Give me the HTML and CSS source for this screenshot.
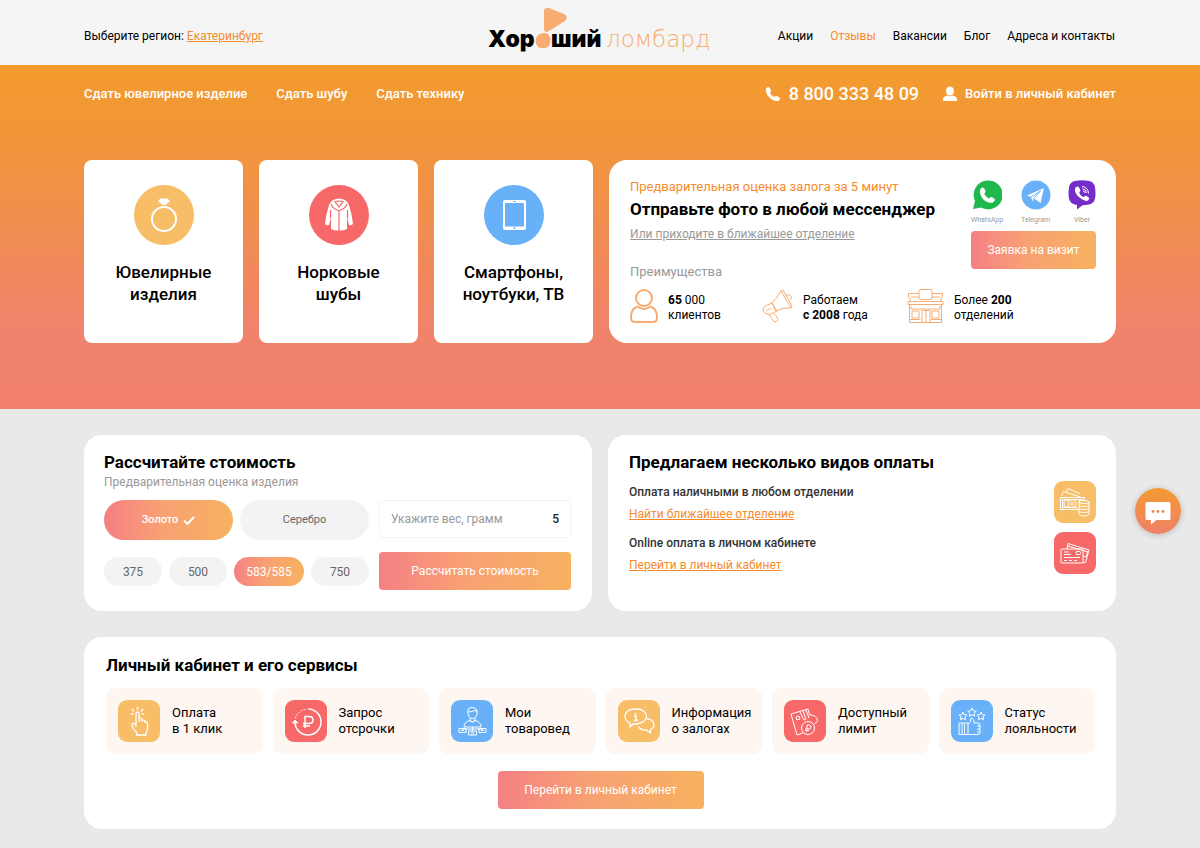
FILE: index.html
```html
<!DOCTYPE html>
<html lang="ru">
<head>
<meta charset="utf-8">
<meta name="viewport" content="width=device-width, initial-scale=1">
<title>Хороший ломбард</title>
<link rel="stylesheet" href="styles.css">
</head>
<body>
<header class="topbar">
  <div class="container topbar-row">
    <p class="region">Выберите регион: <a class="link" href="#">Екатеринбург</a></p>
    <a class="logo" href="#" aria-label="Хороший ломбард">
      <svg width="226" height="52" viewBox="0 0 226 52">
        <path d="M57 6q0-5 5-4l15 6q5 3 1 7L62 25q-5 3-5-3z" fill="#f8ac72"/>
        <path d="M51 29q7-4 11 0 3 5 0 11-5 4-11 1-5-6 0-12z" fill="#f8ac72"/>
        <text class="logo-bold" x="1" y="41">Хор</text>
        <text class="logo-bold" x="64" y="41">ший</text>
        <text class="logo-thin" x="119" y="41">ломбард</text>
      </svg>
    </a>
    <nav class="topnav">
      <a href="#">Акции</a>
      <a class="active" href="#">Отзывы</a>
      <a href="#">Вакансии</a>
      <a href="#">Блог</a>
      <a href="#">Адреса и контакты</a>
    </nav>
  </div>
</header>

<section class="hero">
  <div class="container">
    <div class="hero-nav">
      <nav class="hero-links">
        <a href="#">Сдать ювелирное изделие</a>
        <a href="#">Сдать шубу</a>
        <a href="#">Сдать технику</a>
      </nav>
      <div class="hero-contacts">
        <a class="phone" href="tel:88003334809">
          <svg width="16" height="16" viewBox="0 0 16 16"><path fill="#fff" d="M1 2.600C2.200 1 3.600.6 4.500 1.700l1.300 2c.6 1 .3 1.700-.8 2.800.7 2 2.400 3.700 4.500 4.500 1.100-1.100 1.800-1.400 2.800-.8l2 1.300c1.200.9.700 2.300-.9 3.400C7.500 16.400-.4 8.400 1 2.600z"/></svg>
          8 800 333 48 09
        </a>
        <a class="login" href="#">
          <svg width="14" height="16" viewBox="0 0 14 16"><ellipse cx="7" cy="5" rx="4" ry="4.500" fill="#fff"/><path fill="#fff" d="M0 15v-2c0-2 2-3 4.500-3.500 1.500 1 3.500 1 5 0C12 10 14 11 14 13v2z"/></svg>
          Войти в личный кабинет
        </a>
      </div>
    </div>

    <div class="hero-grid">
      <a class="category" href="#">
        <svg width="60" height="60" viewBox="0 0 60 60"><circle cx="30" cy="30" r="30" fill="#f7bd67"/><circle cx="30" cy="34" r="12" fill="none" stroke="#fff" stroke-width="2"/><path d="M26.500 13.500h7l2.500 2.500-4.500 4h-3l-4.500-4z" fill="#fff"/></svg>
        <span>Ювелирные<br>изделия</span>
      </a>
      <a class="category" href="#">
        <svg width="60" height="60" viewBox="0 0 60 60"><circle cx="30" cy="30" r="30" fill="#f76969"/><path fill="#fff" d="M24 15q6-3 12 0 3 2 4 5 3 9 4 19-2 2-4 1l-2-8v12q-4 2-8 1.500-4 .5-8-1.500V32l-2 8q-2 1-4-1 1-10 4-19 1-3 4-5z"/><path fill="none" stroke="#f76969" stroke-width="1.200" d="M22 19q2 5 7.500 6.500h1Q36 24 38 19M26 16.500q4-1 8 0L30 22zM30 25.500V46M21.500 25v8M38.500 25v8"/></svg>
        <span>Норковые<br>шубы</span>
      </a>
      <a class="category" href="#">
        <svg width="60" height="60" viewBox="0 0 60 60"><circle cx="30" cy="30" r="30" fill="#68b0f8"/><rect x="19" y="15" width="23" height="30" rx="2" fill="#fff"/><path d="M21 18h19v23.500H21z" fill="#68b0f8"/><path d="M29 16.500h3" stroke="#68b0f8"/><circle cx="30.500" cy="43.200" r="1" fill="#68b0f8"/></svg>
        <span>Смартфоны,<br>ноутбуки, ТВ</span>
      </a>
      <div class="offer">
        <div class="offer-top">
          <div class="offer-text">
            <p class="offer-lead">Предварительная оценка залога за 5 минут</p>
            <h2>Отправьте фото в любой мессенджер</h2>
            <a class="offer-link" href="#">Или приходите в ближайшее отделение</a>
          </div>
          <div class="offer-side">
            <div class="messengers">
              <a href="#"><svg width="30" height="30" viewBox="0 0 30 30"><path d="M1 29l2-8A14.500 14.500 0 1 1 9 27.500z" fill="#1fb84f"/><path d="M8 10c1-3 3-3 4-2l1.500 3c.3 1-.5 2-1.300 2.500 1 2.500 3 4 5 5 1-1.300 1.800-1.800 2.800-1.300l2.500 1.500c1 1 0 3-2 4C13 24 7 16 8 10z" fill="#fff"/></svg><span>WhatsApp</span></a>
              <a href="#"><svg width="30" height="30" viewBox="0 0 30 30"><circle cx="15" cy="15" r="14.500" fill="#68b0f8"/><path d="M6 15.500L23 8l-3.500 15-5.500-4-2.500 3-1.500-5z" fill="#fff"/><path d="M10 17l9.500-6-6.500 7-1.500 4" fill="none" stroke="#68b0f8"/></svg><span>Telegram</span></a>
              <a href="#"><svg width="28" height="30" viewBox="1 0 28 30"><path d="M8 1q7-1.500 14 0 5.500 1 6 6.500 1 6 0 11-1 5-6 6-3 .8-6.500.8L10 29.500V25q-7-1-8-6.500-1-6 0-11 .5-5.500 6-6.500z" fill="#742dcb"/><path d="M8 9c1-3 3-3 4-1.500l1.300 2.500c.4 1-.8 1.500-1 2.500.6 2.200 2 3.800 4.200 4.500 1-.5 1.500-1.500 2.500-1.200l2.500 1.500c1.500 1 0 3-1.500 3.700C14 20 7 14 8 9z" fill="#fff"/><path d="M15 6.500q6 .5 6.500 7M15.500 8.800q3.700.5 4 4.200M16 11q1.500 0 2 2" fill="none" stroke="#fff"/></svg><span>Viber</span></a>
            </div>
            <button class="btn" type="button">Заявка на визит</button>
          </div>
        </div>
        <h3>Преимущества</h3>
        <ul class="benefits">
          <li><svg width="28" height="34" viewBox="0 0 28 34" class="line-orange"><circle cx="14" cy="9" r="8"/><path d="M7.500 17.500q6.500 5 13 0 6 2 6.500 9.500v2q0 4-4 4H5q-4 0-4-4v-2q.5-7.500 6.500-9.500z"/></svg><span><b>65</b> 000<br>клиентов</span></li>
          <li><svg width="31" height="34" viewBox="0 0 31 34" class="line-orange thin"><path d="M10 14q6-6 9-12l2-1 9 16-1 2q-8-1-15 3zM19 2l10 17M10 14l5 8-7 3.500q-5 0-6.500-3.500t1.500-5zM7 25.500l5 7q2 1 3.500-1t-3.500-7M24 6q3-1 5 1t-1 4M4 22l5-3"/></svg><span>Работаем<br><b>с 2008</b> года</span></li>
          <li><svg width="37" height="34" viewBox="0 0 37 34" class="line-orange thin"><path d="M12 4V2.500Q12 .5 14 .5h9q2 0 2 2v6q0 2-2 2h-9q-2 0-2-2zM12 4.500H1.500v3.500l1.500 1v4M25 4.500h10.500v3.500L34 9v4M4 8h8M25 8h8M1 12.500h35v3H1zM2.500 16v17.500h32V16M4 17v3h29v-3M5 22h7v7H5zM25 22h7v7h-7zM15 33.500V21.500h8v12M19 21.500v12M2.500 30.500h11M24 30.500h10.500"/></svg><span>Более <b>200</b><br>отделений</span></li>
        </ul>
      </div>
    </div>
  </div>
</section>

<main class="container content">
  <div class="two-col">
    <form class="panel calc">
      <h2>Рассчитайте стоимость</h2>
      <p class="hint">Предварительная оценка изделия</p>
      <div class="calc-grid">
        <div class="calc-left">
          <div class="metals">
            <label class="pill"><input type="radio" name="metal" checked><span>Золото <svg width="12" height="9" viewBox="0 0 12 9"><path d="M1 4.500L4.500 8 11 1" fill="none" stroke="#fff" stroke-width="2"/></svg></span></label>
            <label class="pill"><input type="radio" name="metal"><span>Серебро</span></label>
          </div>
          <div class="purities">
            <label class="pill"><input type="radio" name="purity"><span>375</span></label>
            <label class="pill"><input type="radio" name="purity"><span>500</span></label>
            <label class="pill"><input type="radio" name="purity" checked><span>583/585</span></label>
            <label class="pill"><input type="radio" name="purity"><span>750</span></label>
          </div>
        </div>
        <div class="calc-right">
          <label class="weight">Укажите вес, грамм <input type="text" value="5" inputmode="numeric"></label>
          <button class="btn" type="button">Рассчитать стоимость</button>
        </div>
      </div>
    </form>

    <section class="panel payments">
      <h2>Предлагаем несколько видов оплаты</h2>
      <div class="pay-row">
        <p>Оплата наличными в любом отделении<br><a class="link" href="#">Найти ближайшее отделение</a></p>
        <svg class="tile yellow" width="42" height="42" viewBox="0 0 42 42"><path d="M6.500 16.500h24v12h-24zM8.500 18.500h20v3M8.500 26.500h15M8.500 18.500v8M7.500 15l2-4.500 17 5.500M12 11l2-3.500L26.500 13M14 19.500q-3-1-4 1v4q1 2 4 1M24 20h2.500"/><circle cx="18" cy="22.500" r="4"/><circle cx="18" cy="22.500" r="1.500"/><path class="yellow-fill" d="M25 21q0-1.500 5-1.500t5 1.500v12q0 2-5 2t-5-2z"/><path d="M25 21q0 1.500 5 1.500t5-1.500M25 24q0 1.500 5 1.500t5-1.500M25 27q0 1.500 5 1.500t5-1.500M25 30q0 1.500 5 1.500t5-1.500"/></svg>
      </div>
      <div class="pay-row">
        <p>Online оплата в личном кабинете<br><a class="link" href="#">Перейти в личный кабинет</a></p>
        <svg class="tile red" width="42" height="42" viewBox="0 0 42 42"><rect x="7" y="17" width="22" height="14" rx="1"/><path d="M13 17l1-5.500L35 18l-3.500 12.500H29M14 14l20 6M29 24l3 1 1.500-5M10 20h5M10 22.500h7M10 25.500h16M10 28.500h3M15 28.500h3M20 28.500h3"/><rect x="22" y="19.500" width="4.500" height="3" rx="1"/></svg>
      </div>
    </section>
  </div>

  <section class="panel account">
    <h2>Личный кабинет и его сервисы</h2>
    <div class="services">
      <a href="#"><svg class="tile yellow" width="42" height="42" viewBox="0 0 42 42"><path stroke-width="1.300" d="M18 27V14q0-2 1.500-2t1.500 2v8V18.500q3-1 3 1.500v2-1.500q3-1 3 1.500v1-1q2.500-.5 2.500 1.500v5q0 3-1.500 4v2.500H18.500V32q-4-3-4.500-6.500t4-1M19.500 10V7M16 11.500L14 9M23 11.500L25 9M15.500 14H13M23.500 14H26"/></svg><span>Оплата<br>в 1 клик</span></a>
      <a href="#"><svg class="tile red" width="42" height="42" viewBox="0 0 42 42"><path d="M23.500 9a13 13 0 1 1-13.500 13" stroke-width="1.500"/><path d="M10.500 18a13 13 0 0 1 11.500-9" stroke-width="1.300" stroke-dasharray="1 2"/><path d="M7.500 23l2.500-3 2.500 3z" fill="#fff"/><path d="M20 28V16.500h4q4 0 4 3.500t-4 3.500h-6M18 26h7" stroke-width="1.500"/></svg><span>Запрос<br>отсрочки</span></a>
      <a href="#"><svg class="tile blue" width="42" height="42" viewBox="0 0 42 42"><path d="M17 10q0-2.500 4-2.500t5 2.500v4q-1 4.500-4.500 4.500T17 14zM17 12q5 0 7-2l2 2M19 18v2.500l2.500 1.500 2.500-1.500V18M13 27q0-5 6-6.500l2.500 2 2.500-2q6 1.500 6 6.500zM21.500 27v4M12 31v-2h19v2M8 28.500h7v4H8zM28 28.500h7v4h-7zM17.500 31h8v4h-8zM10 30.500h3M30 30.500h3M20 33h3"/></svg><span>Мои<br>товаровед</span></a>
      <a href="#"><svg class="tile yellow" width="42" height="42" viewBox="0 0 42 42"><path stroke-width="1.300" d="M12 27v-4c-8-3-7-14 6-14 14 0 14 14 0 15h-3z"/><path stroke-width="1.300" d="M28.500 18.500c9 1 9 9 4 11V33l-4-3c-4 0-7-1-8-3.500"/><path d="M17.500 13v1.500M16 16h2v4M16 20.500h4" stroke-width="1.500"/></svg><span>Информация<br>о залогах</span></a>
      <a href="#"><svg class="tile red" width="42" height="42" viewBox="0 0 42 42"><path d="M7 14L24 9l1.500 6M7 14l6 21 6-2M12 17l3-1 1 3-3 1zM16 12l4 8 2-1-3-8M22 10l3 8M26 15q7 0 7.500 6-.5 2-3 2.500"/><circle cx="24" cy="28" r="6.500"/><path d="M23 32v-7h2q2 0 2 2t-2 2h-4M21 30.500h4"/></svg><span>Доступный<br>лимит</span></a>
      <a href="#"><svg class="tile blue" width="42" height="42" viewBox="0 0 42 42"><path d="M21 8l1.300 2.800 3 .4-2.200 2 .5 3-2.600-1.400-2.600 1.400.5-3-2.200-2 3-.4zM12 12l1.200 2.600 2.800.4-2 2 .5 2.800-2.500-1.400-2.500 1.400.5-2.800-2-2 2.800-.4zM30 12l1.200 2.600 2.800.4-2 2 .5 2.800-2.500-1.400-2.500 1.400.5-2.800-2-2 2.800-.4zM8 23h9v11.500H8zM11 23v11.500M13.500 24v10M17 24q3-1 3-6 3 0 3 5h4q2 0 2 2v7.500q0 2-2 2H17M26 26h3M26 29h3M26 32h3"/></svg><span>Статус<br>лояльности</span></a>
    </div>
    <button class="btn account-btn" type="button">Перейти в личный кабинет</button>
  </section>
</main>

<button class="chat" type="button" aria-label="Чат">
  <svg width="26" height="24" viewBox="0 0 26 24"><path d="M2 1h22q1.500 0 1.500 1.500v15q0 1.500-1.500 1.500H11.500L6 23.500V19H2Q.5 19 .5 17.500v-15Q.5 1 2 1z" fill="#fff"/><g fill="#ee8852"><circle cx="8" cy="10.500" r="1.400"/><circle cx="13" cy="10.500" r="1.400"/><circle cx="18" cy="10.500" r="1.400"/></g></svg>
</button>
</body>
</html>
```

FILE: styles.css
```css
* { box-sizing: border-box; }
body { margin: 0; background: #e9e9e9; color: #000; font: 12px/16px Roboto, "Noto Sans", sans-serif; }
a { color: inherit; text-decoration: none; }
p, h2, h3, ul { margin: 0; padding: 0; }
button, input { font: inherit; }
svg { flex: none; }
h2 { font-size: 17px; line-height: 22px; font-weight: 700; }
.container { max-width: 1032px; margin: 0 auto; }
.link { color: #f68b2c; text-decoration: underline; }

.topbar { background: #f5f5f5; }
.topbar-row { display: grid; grid-template-columns: 1fr auto 1fr; align-items: center; height: 65px; padding-top: 7px; }
.logo { display: block; height: 52px; margin-top: -8px; }
.logo-bold { font: 900 23px Inter, sans-serif; }
.logo-thin { font: 200 23px "DejaVu Sans Light", "DejaVu Sans", sans-serif; fill: #f8ac72; }
.topnav { display: flex; justify-content: flex-end; gap: 17px; padding-right: 1px; }
.topnav .active { color: #f68b2c; }

.hero { padding: 16px 0 66px; background: linear-gradient(#f39b2d, #f2963a 22%, #f0836b 76%, #f0806d); }
.hero-nav { display: flex; justify-content: space-between; align-items: center; height: 26px; margin-bottom: 53px; color: #fff; font-size: 13px; font-weight: 500; }
.hero-links { display: flex; gap: 29px; }
.hero-contacts, .phone, .login { display: flex; align-items: center; }
.hero-contacts { gap: 24px; }
.phone { gap: 8px; font-size: 18px; }
.login { gap: 8px; }

.hero-grid { display: grid; grid-template-columns: 159fr 159fr 159fr 507fr; gap: 16px; }
.category { display: flex; flex-direction: column; align-items: center; gap: 16px; min-height: 183px; padding-top: 25px; background: #fff; border-radius: 8px; text-align: center; font-size: 17px; line-height: 22px; font-weight: 500; }

.offer { padding: 18px 20px 18px 21px; background: #fff; border-radius: 18px; }
.offer-top { display: flex; justify-content: space-between; }
.offer-text { display: flex; flex-direction: column; align-items: flex-start; }
.offer-lead { color: #f68b2c; font-size: 13px; line-height: 18px; margin-bottom: 2px; }
.offer-link { margin-top: 6px; color: #999; text-decoration: underline; }
.offer-side { width: 125px; }
.messengers { display: flex; justify-content: space-between; margin-top: 2px; }
.messengers a { display: flex; flex-direction: column; align-items: center; gap: 5px; color: #999; font-size: 7px; line-height: 10px; }
.offer-side .btn { margin-top: 6px; width: 100%; }
.offer h3 { color: #999; font-size: 13px; line-height: 18px; font-weight: 400; margin: -6px 0 8px; }
.benefits { display: grid; grid-template-columns: 132px 145px auto; list-style: none; line-height: 15px; }
.benefits li { display: flex; align-items: flex-end; gap: 10px; }
.line-orange { fill: none; stroke: #f8ac72; stroke-width: 2; }
.line-orange.thin { stroke-width: 1; }

.btn { height: 38px; border: 0; border-radius: 4px; color: #fff; background: linear-gradient(90deg, #f58084, #f8a173 45%, #f7b15f); cursor: pointer; }

.content { display: flex; flex-direction: column; gap: 26px; padding: 26px 0 19px; }
.two-col { display: grid; grid-template-columns: 1fr 1fr; gap: 16px; }
.panel { background: #fff; border-radius: 18px; }
.calc { padding: 16px 21px 21px 20px; }
.hint { color: #999; margin: 1px 0 10px; }
.calc-grid { display: grid; grid-template-columns: 265fr 192fr; gap: 10px; }
.calc-left { display: flex; flex-direction: column; gap: 17px; }
.calc-right { display: flex; flex-direction: column; gap: 14px; }
.metals { display: grid; grid-template-columns: 1fr 1fr; gap: 7px; font-size: 11px; }
.purities { display: grid; grid-template-columns: 58fr 58fr 70fr 58fr; gap: 7px; }
.pill { position: relative; cursor: pointer; }
.pill input { position: absolute; inset: 0; margin: 0; opacity: 0; }
.pill span { display: flex; align-items: center; justify-content: center; gap: 5px; height: 29px; border-radius: 20px; background: #f3f3f3; color: #66666b; }
.metals .pill span { height: 40px; }
.pill input:checked + span { color: #fff; background: linear-gradient(90deg, #f58084, #f8a173 45%, #f7b15f); }
.metals input:checked + span { font-weight: 500; }
.weight { display: flex; align-items: center; justify-content: space-between; height: 38px; padding: 0 11px; border: 1px solid #f3f3f3; border-radius: 4px; color: #999; }
.weight input { width: 30px; border: 0; padding: 0; background: none; text-align: right; font-weight: 500; color: #222; }

.payments { padding: 16px 20px 20px 21px; }
.payments h2 { margin-bottom: 8px; }
.pay-row { display: flex; justify-content: space-between; line-height: 22px; color: #333; font-weight: 500; margin-bottom: 7px; }
.pay-row .link { font-weight: 400; }
.tile { border-radius: 9px; fill: none; stroke: #fff; stroke-width: 1; }
.yellow { background: #f7bd67; }
.yellow-fill { fill: #f7bd67; }
.red { background: #f76969; }
.blue { background: #68b0f8; }

.account { padding: 17px 21px 20px 22px; }
.services { display: grid; grid-template-columns: repeat(6, minmax(0, 1fr)); gap: 10px; margin-top: 12px; font-size: 13px; }
.services a { display: flex; align-items: center; gap: 12px; padding: 12px 0 12px 12px; background: #fef6f1; border-radius: 9px; white-space: nowrap; }
.account-btn { display: block; width: 206px; margin: 17px auto 0; }

.chat { position: fixed; right: 19px; top: 488px; display: flex; align-items: center; justify-content: center; width: 46px; height: 46px; padding: 3px 0 0; border: 0; border-radius: 50%; background: linear-gradient(#f29a30, #f0806a); box-shadow: 0 1px 6px rgba(0, 0, 0, .2); cursor: pointer; }
```
